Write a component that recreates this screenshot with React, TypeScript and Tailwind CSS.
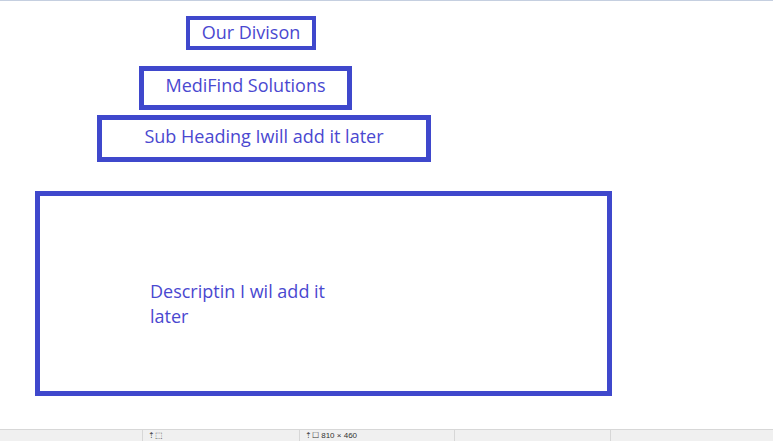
import React from "react";

export default function App() {
  const font = { fontFamily: '"Open Sans", "Noto Sans", sans-serif' };
  return (
    <div className="w-[773px] h-[441px] bg-white overflow-hidden flex flex-col relative" style={font}>
      <div className="h-px bg-[#c5cfe0] shrink-0" />
      <div className="flex-1 flex flex-col items-start text-[#4a48d0]">
        <div className="ml-[186px] mt-[15px] w-[130px] h-[34px] border-4 border-[#3f48cc] flex items-center justify-center text-[18px] leading-none pb-[3px]">
          Our Divison
        </div>
        <div className="ml-[139px] mt-[16px] w-[213px] h-[44px] border-[5px] border-[#3f48cc] flex items-center justify-center text-[18px] leading-none pb-[6px]">
          MediFind Solutions
        </div>
        <div className="ml-[97px] mt-[5px] w-[334px] h-[47px] border-[5px] border-[#3f48cc] flex items-center justify-center text-[18px] leading-none pb-[6px]">
          Sub Heading Iwill add it later
        </div>
        <div className="ml-[35px] mt-[29px] w-[577px] h-[205px] border-[5px] border-[#3f48cc] pl-[110px] pt-[83px]">
          <p className="w-[200px] text-[18px] leading-[25px]">Descriptin I wil add it later</p>
        </div>
      </div>
      <div className="h-[12px] shrink-0 bg-[#f0f0f0] border-t border-[#d7d7d7] flex text-[8px] text-[#333] leading-none overflow-hidden" style={{ fontFamily: '"Liberation Sans", sans-serif' }}>
        <div className="w-[143px] border-r border-[#d7d7d7]" />
        <div className="w-[157px] border-r border-[#d7d7d7] pl-[5px] pt-[2px]">⇡⬚</div>
        <div className="w-[155px] border-r border-[#d7d7d7] pl-[5px] pt-[2px]">⇡☐ 810 × 460</div>
        <div className="w-[156px] border-r border-[#d7d7d7]" />
        <div className="flex-1" />
      </div>
    </div>
  );
}
